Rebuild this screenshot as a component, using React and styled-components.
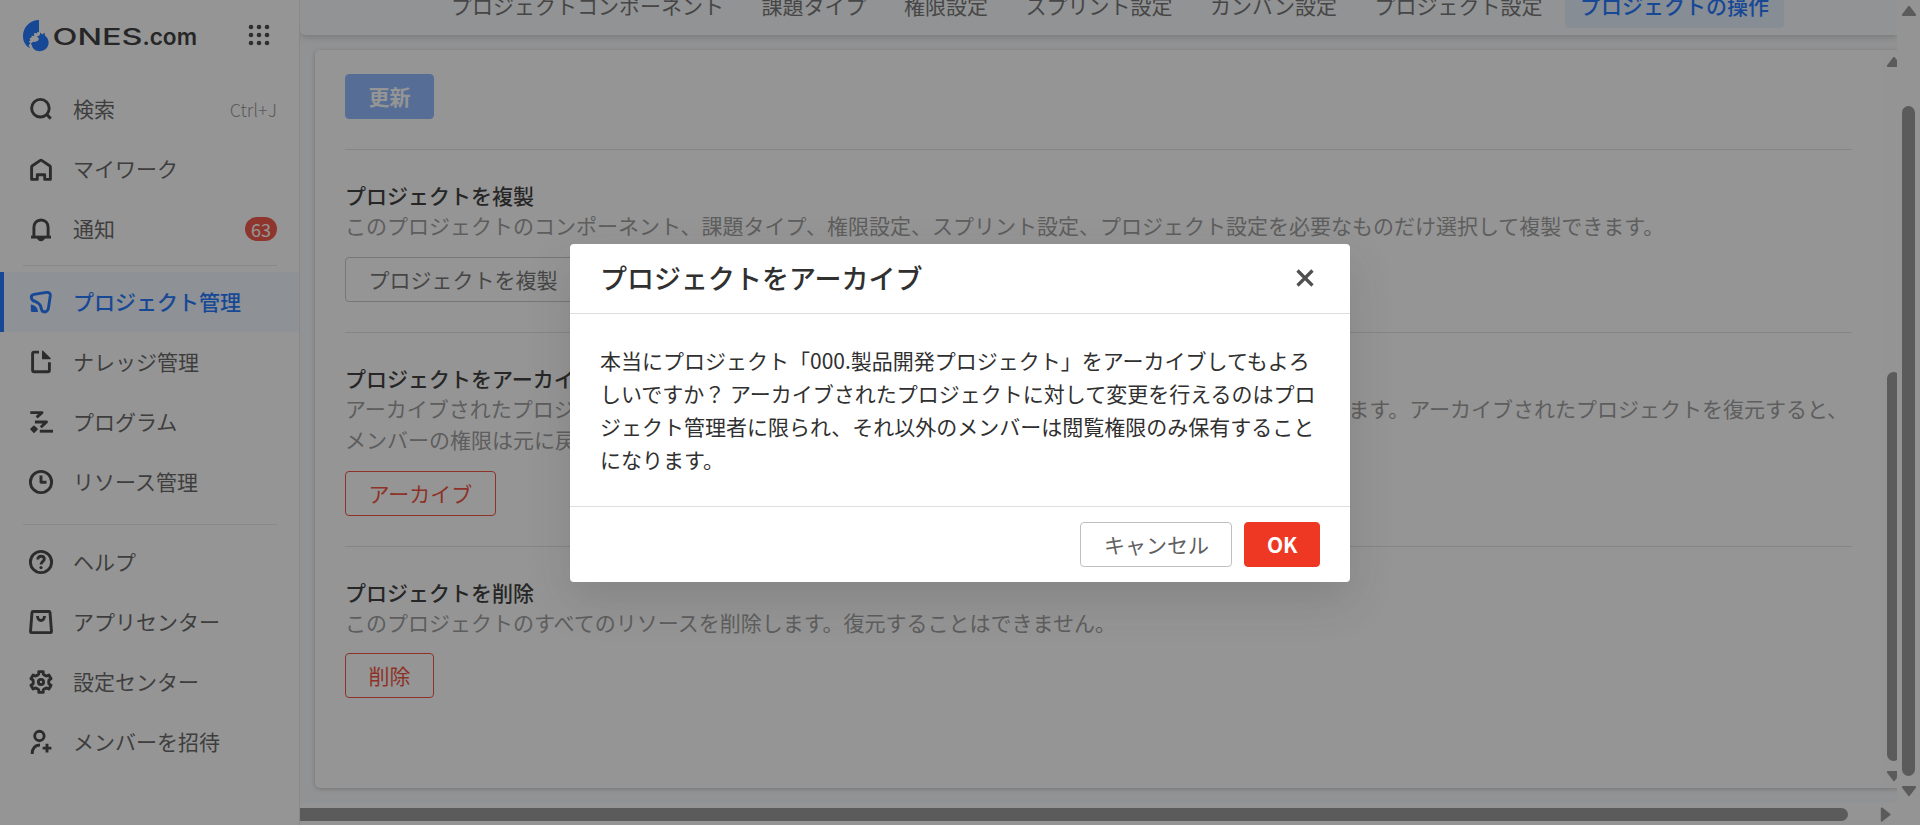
import React from "react"
import styled, { createGlobalStyle, css } from "styled-components"

const GlobalStyle = createGlobalStyle`
  * {
    box-sizing: border-box;
  }

  body {
    margin: 0;
    overflow: hidden;
    background: #fff;
    color: #303030;
    font-family: "Noto Sans CJK JP", "Noto Sans", sans-serif;
    font-size: 21px;
  }

  button {
    font-family: inherit;
    font-size: inherit;
  }
`

const Page = styled.div`
  display: flex;
  width: 1920px;
  height: 825px;
  overflow: hidden;
`

/* sidebar */

const Sidebar = styled.nav`
  flex: none;
  width: 300px;
  height: 100%;
  border-right: 1px solid #e5e5e5;
`

const Brand = styled.div`
  display: flex;
  align-items: flex-start;
  justify-content: space-between;
  height: 79px;
  padding: 19px 29px 0 22px;
`

const AppGrid = styled.svg`
  margin-top: 5px;
`

const NavItem = styled.div`
  display: flex;
  align-items: center;
  height: 60px;
  padding: 0 22px 0 29px;
  color: #505050;

  ${({ $active }) =>
    $active &&
    css`
      padding-left: 25px;
      border-left: 4px solid #0064ff;
      background: #f0f6ff;
      color: #0064ff;
      font-weight: 500;
    `}
`

const NavIcon = styled.svg`
  flex: none;
  margin-right: 20px;
  color: ${({ $active }) => ($active ? "#0064ff" : "#2c2c2c")};
  overflow: visible;
`

const NavLabel = styled.span`
  flex: 1;
  padding-bottom: 2px;
  line-height: 30px;
`

const Shortcut = styled.span`
  padding-bottom: 1px;
  color: #8c8c8c;
  font-size: 18px;
  font-weight: 300;
`

const Badge = styled.span`
  width: 32px;
  height: 24px;
  border-radius: 12px;
  background: #f0402e;
  color: #fff;
  font-size: 18px;
  line-height: 24px;
  text-align: center;
`

const NavDivider = styled.div`
  height: 1px;
  margin: ${({ $top }) => $top}px 22px ${({ $bottom }) => $bottom}px 23px;
  background: #e5e5e5;
`

/* content */

const Main = styled.main`
  display: flex;
  flex: 1;
  flex-direction: column;
  min-width: 0;
  overflow: hidden;
  background: #f7f8fa;
`

const TabBar = styled.div`
  display: flex;
  flex: none;
  align-items: flex-end;
  gap: 7.5px;
  height: 35px;
  padding: 0 0 7px 136px;
  border-bottom-left-radius: 5px;
  background: #f8fafc;
  box-shadow: 0 2px 6px rgba(48, 48, 48, 0.25);
`

const Tab = styled.div`
  flex: none;
  height: 45px;
  padding: 0 15px;
  border-radius: 4px;
  background: ${({ $active }) => ($active ? "#e3effd" : "transparent")};
  color: ${({ $active }) => ($active ? "#0064ff" : "#606060")};
  font-weight: ${({ $active }) => ($active ? 500 : 400)};
  line-height: 44px;
`

const Card = styled.div`
  display: flex;
  flex: none;
  width: 1592px;
  height: 738px;
  margin: 15px 0 0 15px;
  border-radius: 5px;
  background: #fff;
  box-shadow: 0 1px 4px rgba(48, 48, 48, 0.3);
`

const CardContent = styled.div`
  width: 1567px;
  padding: 24px 30px 0;
`

const Section = styled.section`
  margin-top: 30px;
  padding-top: 30px;
  border-top: 1px solid #dedede;
`

const SectionTitle = styled.h3`
  margin: 0;
  color: #202020;
  font-size: 21px;
  font-weight: 500;
  line-height: 30px;
`

const SectionText = styled.p`
  margin: 0 0 ${({ $gap = 16 }) => $gap}px;
  color: #909090;
  line-height: 31px;
  white-space: nowrap;
`

const Button = styled.button`
  display: block;
  height: 45px;
  padding: 0 ${({ $pad = 22.5 }) => $pad}px;
  border: 1px solid #c0c0c0;
  border-radius: 4px;
  background: #fff;
  color: #606060;
  line-height: 43px;
  white-space: nowrap;

  ${({ $kind }) =>
    $kind === "primary" &&
    css`
      border-color: #80b1ff;
      background: #80b1ff;
      color: #fff;
      font-weight: 700;
    `}

  ${({ $kind }) =>
    $kind === "outlineDanger" &&
    css`
      border-color: #ee3823;
      color: #ee3823;
    `}

  ${({ $kind }) =>
    $kind === "danger" &&
    css`
      border-color: #ee3823;
      background: #ee3823;
      color: #fff;
      font-weight: 700;
    `}
`

/* scrollbars */

const VTrack = styled.div`
  display: flex;
  flex: none;
  flex-direction: column;
  align-items: center;
  width: 23px;
  padding: ${({ $pad }) => $pad};
  background: #fcfcfc;
`

const VThumb = styled.div`
  width: 13px;
  height: ${({ $height }) => $height}px;
  margin: ${({ $top }) => $top}px 0 10px;
  border-radius: 7px;
  background: #8b8b8b;
`

const HTrack = styled.div`
  display: flex;
  align-items: center;
  justify-content: space-between;
  height: 22px;
  margin-top: auto;
  padding-right: 3px;
  background: #fcfcfc;
`

const HThumb = styled.div`
  width: 1548px;
  height: 13px;
  border-radius: 0 7px 7px 0;
  background: #8b8b8b;
`

/* dialog */

const Overlay = styled.div`
  position: absolute;
  top: 0;
  left: 0;
  display: flex;
  align-items: flex-start;
  justify-content: center;
  width: 1920px;
  height: 825px;
  padding-top: 244px;
  background: rgba(46, 46, 46, 0.505);
`

const Dialog = styled.div`
  width: 780px;
  height: 338px;
  border-radius: 4px;
  background: #fff;
  box-shadow: 0 18px 45px rgba(48, 48, 48, 0.16);
`

const DialogHeader = styled.div`
  display: flex;
  align-items: center;
  justify-content: space-between;
  height: 70px;
  padding: 0 35px 2px 30px;
  border-bottom: 1px solid #dedede;
`

const DialogTitle = styled.h2`
  margin: 0;
  font-size: 27px;
  font-weight: 500;
  line-height: 40px;
`

const DialogBody = styled.div`
  height: 192px;
  padding: 30px;
  line-height: 33px;
`

const DialogFooter = styled.div`
  display: flex;
  justify-content: flex-end;
  gap: 12px;
  height: 76px;
  padding: 15px 30px;
  border-top: 1px solid #dedede;
`

const gearPath = () => {
  const points = []
  for (let i = 0; i < 6; i++) {
    ;[
      [-29, 7.7],
      [-16, 8.2],
      [-12, 10.6],
      [12, 10.6],
      [16, 8.2],
      [29, 7.7],
    ].forEach(([deg, r]) => {
      const a = ((i * 60 + deg) * Math.PI) / 180
      points.push(
        `${(12 + r * Math.sin(a)).toFixed(2)} ${(12 - r * Math.cos(a)).toFixed(2)}`
      )
    })
  }
  return `M${points.join("L")}Z`
}

const icons = {
  search: (
    <>
      <circle cx="11.4" cy="11.2" r="8.8" />
      <path d="M17.6 17.4L21.8 21.6" />
    </>
  ),
  home: (
    <path d="M2.6 10.3C2.6 9.6 2.9 9.1 3.4 8.7L11 3.6C11.600 3.200 12.400 3.200 13 3.600L20.600 8.700C21.100 9.100 21.400 9.600 21.400 10.300V22.400H15.700V17.800H8.300V22.400H2.600Z" />
  ),
  bell: (
    <>
      <path d="M4.9 20V10.6C4.9 6 7.800 3 12 3S19.100 6 19.100 10.600V20" />
      <path d="M2 20.100H22" />
      <path d="M7.800 21H16.200C15.600 22.900 14 24.200 12 24.200S8.400 22.900 7.800 21Z" fill="currentColor" stroke="none" />
    </>
  ),
  project: (
    <>
      <path d="M2.400 8.200C2 6.200 3 4.800 5 4.400L17.500 2.400C20 2 21.600 3.400 21.300 5.800L19.400 18.400C19 20.800 16.500 22.400 14.300 21.600C11.500 20.600 12.900 17.600 10.800 14.700C8.700 12 6.500 11.800 4.200 10.600C3 10 2.700 9.200 2.400 8.200Z" />
      <path d="M1.800 14.400C5.500 14.600 9 17.500 9 22H3.500C2.200 22 1.800 21.500 1.800 20Z" fill="currentColor" stroke="none" />
    </>
  ),
  doc: (
    <>
      <path d="M10 2.100H5.200C4.200 2.100 3.600 2.700 3.600 3.700V20.300C3.600 21.300 4.200 21.800 5.200 21.800H18.900C19.900 21.800 20.400 21.300 20.400 20.300V12.200" />
      <path d="M13 1.300C13 0.600 13.800 0.400 14.300 0.900L21.500 8C22 8.600 21.700 9.300 21 9.300H13Z" fill="currentColor" stroke="none" />
    </>
  ),
  program: (
    <>
      <path d="M1.300 2.600H13L7.600 7.400" />
      <path d="M5.900 12H17.500L11.800 17.200" />
      <path d="M10.800 21.200H24" />
      <path d="M5 16.300L8 19.200L5 22.100L2 19.200Z" fill="currentColor" strokeWidth="1.600" />
    </>
  ),
  clock: (
    <>
      <circle cx="12" cy="12" r="10.600" />
      <path d="M12 5.500V12.200H17.500" />
    </>
  ),
  help: (
    <>
      <circle cx="12" cy="12" r="10.600" />
      <path d="M8.800 9.400C8.800 7.400 10.200 6.300 12 6.300S15.300 7.400 15.300 9.100C15.300 11.300 12 11.500 12 14.600" />
      <circle cx="12" cy="17.600" r="1.600" fill="currentColor" stroke="none" />
    </>
  ),
  app: (
    <>
      <path d="M4 1.500H20C20.500 1.500 20.900 1.800 21 2.400L22.500 21.500C22.500 22.200 22.200 22.600 21.600 22.600H2.400C1.800 22.600 1.500 22.200 1.500 21.500L3 2.400C3.100 1.800 3.500 1.500 4 1.500Z" />
      <path d="M8.500 6C8.500 12 15.500 12 15.500 6" />
    </>
  ),
  settings: (
    <>
      <path d={gearPath()} />
      <circle cx="12" cy="12" r="2.600" />
    </>
  ),
  invite: (
    <>
      <circle cx="10.400" cy="6" r="4.700" />
      <path d="M3.200 24C3.200 18.500 6 15.200 11 15" />
      <path d="M18 13.700V22.500M13.600 18.100H22.400" />
    </>
  ),
}

const mainNav = [
  { icon: "search", label: "検索", shortcut: "Ctrl+J" },
  { icon: "home", label: "マイワーク" },
  { icon: "bell", label: "通知", badge: 63 },
]

const productNav = [
  { icon: "project", label: "プロジェクト管理", active: true },
  { icon: "doc", label: "ナレッジ管理" },
  { icon: "program", label: "プログラム" },
  { icon: "clock", label: "リソース管理" },
]

const footerNav = [
  { icon: "help", label: "ヘルプ" },
  { icon: "app", label: "アプリセンター" },
  { icon: "settings", label: "設定センター" },
  { icon: "invite", label: "メンバーを招待" },
]

const tabs = [
  "プロジェクトコンポーネント",
  "課題タイプ",
  "権限設定",
  "スプリント設定",
  "カンバン設定",
  "プロジェクト設定",
  "プロジェクトの操作",
]

const Logo = () => (
  <svg width="176" height="36" viewBox="0 0 176 36">
    <g fill="#0064ff">
      <path d="M17 1V13.200L15.800 12.800L14.800 14.600L12.800 13.700L11.900 15L12.300 17L9.800 16.800L9.300 18.700L7.600 19.200L8.400 21.400L6.800 22.600L8.300 24.300L6.600 26.200L8 29.200C3.500 27 1 22.500 1 17C1 8 8 1 17 1Z" />
      <path d="M18.200 13.500L20.300 15.400L22.600 13.800L23 16.800C25.300 18.400 26.600 21 26.600 23.500C26.600 28.500 22.500 32.200 17.500 32.200C13.500 32.200 10.500 29.800 10 26.500L8.800 24.500L11.200 22.800C14 23.300 16.800 22.300 16.900 19.600L15 17.500L17.800 16.300Z" />
    </g>
    <text
      x="30.500"
      y="26"
      fill="#202020"
      fontFamily="Inter, sans-serif"
      fontSize="22.500"
      fontWeight="500"
      textLength="90"
      lengthAdjust="spacingAndGlyphs"
    >
      ONES
    </text>
    <text
      x="120.500"
      y="26.300"
      fill="#202020"
      fontFamily="Inter, sans-serif"
      fontSize="22.500"
      fontWeight="600"
      textLength="54.500"
      lengthAdjust="spacingAndGlyphs"
    >
      .com
    </text>
  </svg>
)

const Arrow = ({ rotate = 0 }) => (
  <svg width="16" height="11" viewBox="0 0 16 11" transform={`rotate(${rotate})`}>
    <path
      d="M8 1.900L14.100 9.900H1.900Z"
      fill="#8b8b8b"
      stroke="#8b8b8b"
      strokeWidth="2"
      strokeLinejoin="round"
    />
  </svg>
)

const NavList = ({ items }) =>
  items.map(({ icon, label, active, shortcut, badge }) => (
    <NavItem key={icon} $active={active}>
      <NavIcon
        $active={active}
        width="24"
        height="24"
        viewBox="0 0 24 24"
        fill="none"
        stroke="currentColor"
        strokeWidth="2.900"
        strokeLinejoin="round"
      >
        {icons[icon]}
      </NavIcon>
      <NavLabel>{label}</NavLabel>
      {shortcut && <Shortcut>{shortcut}</Shortcut>}
      {badge && <Badge>{badge}</Badge>}
    </NavItem>
  ))

const ArchiveDialog = () => (
  <Overlay>
    <Dialog>
      <DialogHeader>
        <DialogTitle>プロジェクトをアーカイブ</DialogTitle>
        <svg width="20" height="20" viewBox="0 0 20 20" stroke="#505050" strokeWidth="3.200">
          <path d="M2.500 2.500L17.500 17.500M17.500 2.500L2.500 17.500" />
        </svg>
      </DialogHeader>
      <DialogBody>
        本当にプロジェクト「000.製品開発プロジェクト」をアーカイブしてもよろしいですか？
        アーカイブされたプロジェクトに対して変更を行えるのはプロジェクト管理者に限られ、それ以外のメンバーは閲覧権限のみ保有することになります。
      </DialogBody>
      <DialogFooter>
        <Button>キャンセル</Button>
        <Button $kind="danger" $pad={21.5}>
          OK
        </Button>
      </DialogFooter>
    </Dialog>
  </Overlay>
)

const App = () => (
  <>
    <GlobalStyle />
    <Page>
      <Sidebar>
        <Brand>
          <Logo />
          <AppGrid width="22" height="22" viewBox="0 0 22 22" fill="#303030">
            {[3, 11, 19].map(y =>
              [3, 11, 19].map(x => <circle key={`${x}-${y}`} cx={x} cy={y} r="2.3" />)
            )}
          </AppGrid>
        </Brand>
        <NavList items={mainNav} />
        <NavDivider $top={6} $bottom={6} />
        <NavList items={productNav} />
        <NavDivider $top={12} $bottom={7} />
        <NavList items={footerNav} />
      </Sidebar>

      <Main>
        <TabBar>
          {tabs.map((tab, i) => (
            <Tab key={tab} $active={i === tabs.length - 1}>
              {tab}
            </Tab>
          ))}
        </TabBar>
        <Card>
          <CardContent>
            <Button $kind="primary">更新</Button>
            <Section>
              <SectionTitle>プロジェクトを複製</SectionTitle>
              <SectionText>
                このプロジェクトのコンポーネント、課題タイプ、権限設定、スプリント設定、プロジェクト設定を必要なものだけ選択して複製できます。
              </SectionText>
              <Button>プロジェクトを複製</Button>
            </Section>
            <Section>
              <SectionTitle>プロジェクトをアーカイブ</SectionTitle>
              <SectionText>
                アーカイブされたプロジェクトに対して 変更を行えるのは プロジェクト管理者のみ、 他者は
                閲覧のみできます。アーカイブされたプロジェクトを復元すると、
                <br />
                メンバーの権限は元に戻ります。
              </SectionText>
              <Button $kind="outlineDanger">アーカイブ</Button>
            </Section>
            <Section>
              <SectionTitle>プロジェクトを削除</SectionTitle>
              <SectionText $gap={15}>
                このプロジェクトのすべてのリソースを削除します。復元することはできません。
              </SectionText>
              <Button $kind="outlineDanger">削除</Button>
            </Section>
          </CardContent>
          <VTrack $pad="6px 0 0">
            <Arrow />
            <VThumb $top={305} $height={389} />
            <Arrow rotate={180} />
          </VTrack>
        </Card>
        <HTrack>
          <HThumb />
          <Arrow rotate={90} />
        </HTrack>
      </Main>

      <VTrack $pad="5px 0 0">
        <Arrow />
        <VThumb $top={90} $height={670} />
        <Arrow rotate={180} />
      </VTrack>
    </Page>
    <ArchiveDialog />
  </>
)

export default App
